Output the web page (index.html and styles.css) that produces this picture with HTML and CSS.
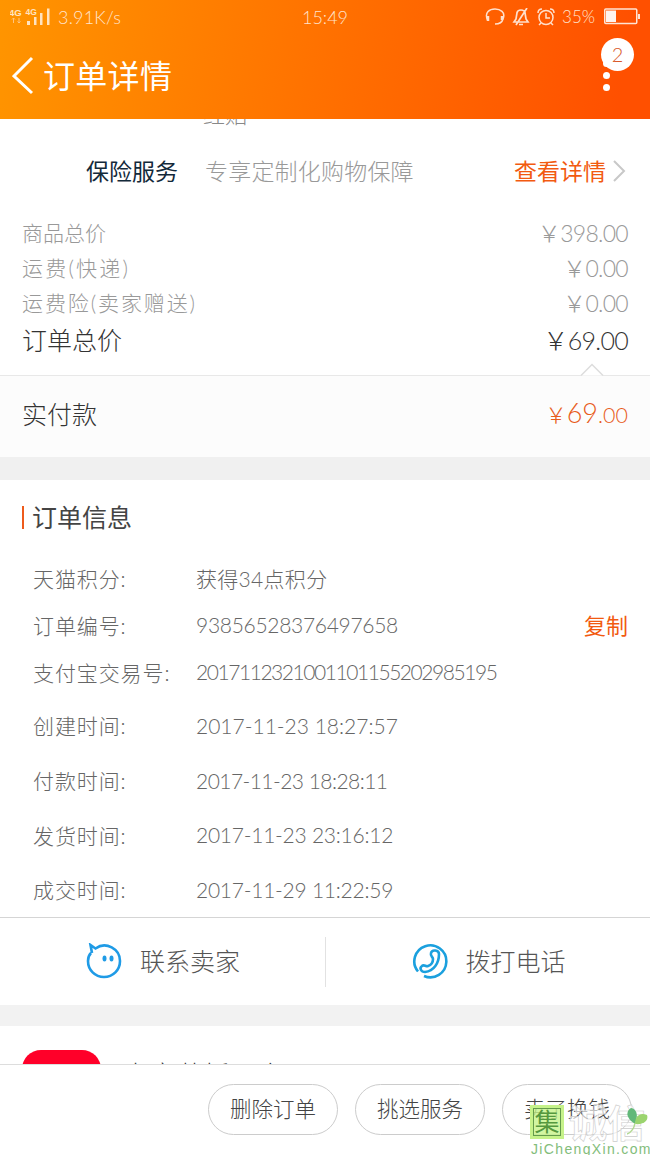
FILE: index.html
```html
<!DOCTYPE html>
<html lang="zh-CN">
<head>
<meta charset="utf-8">
<title>订单详情</title>
<link rel="stylesheet" href="styles.css">
</head>
<body>
<div class="phone">
  <header class="top">
    <div class="status">
      <div class="net">
        <svg width="42" height="18" viewBox="0 0 42 18"><g fill="#ffe3c0"><text x="-1" y="8" class="sim">4G</text><text x="15.500" y="7" class="sim small">4G</text><rect x="17" y="13" width="3" height="4"/><rect x="24" y="9" width="2.5" height="8"/><rect x="30" y="5" width="2.5" height="12"/><rect x="37" y="0.500" width="2.500" height="16.500"/></g><path d="M3.500 10v5M2 11.500l1.500-1.500 1.500 1.500M9 10v5M7.500 13.500l1.500 1.500 1.500-1.500" stroke="#ffc480" fill="none"/></svg>
        <span class="speed">3.91K/s</span>
      </div>
      <span class="clock">15:49</span>
      <div class="tray">
        <svg width="20" height="18" viewBox="0 0 20 18" fill="none" stroke="#ffe0cc" stroke-width="1.500"><path d="M2.500 12C-1 4 5 1 10 1s11 3 8 10c-1 4-4 5-8 5"/><path d="M3 8v5M17 8v4" stroke-width="2.500"/></svg>
        <svg width="18" height="18" viewBox="0 0 18 18" fill="none" stroke="#ffe0cc" stroke-width="1.700"><path d="M2 14h14l-2-3-1-6c-.5-4-7.500-4-8 0l-1 6zM7 16.500h4M15 0L4 17"/></svg>
        <svg width="18" height="18" viewBox="0 0 18 18" fill="none" stroke="#ffe0cc" stroke-width="1.500"><circle cx="9" cy="9.500" r="7"/><path d="M9 5v5h4M1 5c0-3 2-4 4-4M17 5c0-3-2-4-4-4M4 15l-2 2M14 15l2 2"/></svg>
        <span class="percent">35%</span>
        <svg width="36" height="17" viewBox="0 0 36 17"><rect x=".75" y="1" width="32" height="14.500" rx="1" fill="none" stroke="#ffe4d4" stroke-width="1.500"/><path d="M34 6h2v5h-2z" fill="#ffe4d4"/><path d="M2 2.500h10v11.500H2z" fill="#fff3ee"/></svg>
      </div>
    </div>
    <div class="bar">
      <svg width="22" height="40" viewBox="0 0 22 40"><path d="M20 2L2 20l18 17" fill="none" stroke="#fff" stroke-width="3"/></svg>
      <h1>订单详情</h1>
      <div class="more"><i></i><i></i><i></i><b>2</b></div>
    </div>
  </header>
  <main>
    <div class="cut"><span>红贴</span></div>
    <div class="insure"><strong>保险服务</strong><span class="desc">专享定制化购物保障</span><a>查看详情</a><svg width="14" height="22" viewBox="0 0 14 22"><path d="M2 1l10 10L2 21" fill="none" stroke="#c8c8c8" stroke-width="2"/></svg></div>
    <div class="price r1"><span>商品总价</span><span class="num">￥398.00</span></div>
    <div class="price r2"><span>运费(快递)</span><span class="num">￥0.00</span></div>
    <div class="price r3"><span>运费险(卖家赠送)</span><span class="num">￥0.00</span></div>
    <div class="price total"><span>订单总价</span><span class="num">￥69.00</span></div>
    <div class="paid"><svg class="notch" width="24" height="13" viewBox="0 0 24 13"><path d="M1 12.500L12 1.500l11 11" fill="#fff" stroke="#ddd" stroke-width="1.500"/></svg><span>实付款</span><span class="sum">￥<em>69</em>.00</span></div>
    <div class="gap"></div>
    <section class="info">
      <h2>订单信息</h2>
      <dl>
        <div class="short first"><dt>天猫积分:</dt><dd class="points">获得34点积分</dd></div>
        <div class="short"><dt>订单编号:</dt><dd class="order">93856528376497658</dd><a>复制</a></div>
        <div class="short last"><dt>支付宝交易号:</dt><dd class="trade">2017112321001101155202985195</dd></div>
        <div><dt>创建时间:</dt><dd class="d1">2017-11-23 18:27:57</dd></div>
        <div><dt>付款时间:</dt><dd class="d2">2017-11-23 18:28:11</dd></div>
        <div><dt>发货时间:</dt><dd class="d3">2017-11-23 23:16:12</dd></div>
        <div><dt>成交时间:</dt><dd class="d4">2017-11-29 11:22:59</dd></div>
      </dl>
    </section>
    <div class="contact">
      <div><svg width="36" height="36" viewBox="0 0 36 36"><path d="M6 10L4.500 2l5 3.500C20-2 34 6 34 18c0 9-7 16-16 16S2 27 2 18c0-3 1-6 3-8" fill="none" stroke="#1f9be6" stroke-width="2.600"/><ellipse cx="18.500" cy="15.500" rx="2" ry="3" fill="#1f9be6"/><ellipse cx="25.500" cy="15.500" rx="2" ry="3" fill="#1f9be6"/></svg><span>联系卖家</span></div>
      <div><svg width="36" height="36" viewBox="0 0 36 36" fill="none" stroke="#1ba0de" stroke-width="2.600"><path d="M6 28.500A16 16 0 1 1 12 33"/><path d="M19 10c1-4 8-3 8 1 0 9-5 17-14 18-4 0-6-4-3-6 2-2 4 1 6 0 3-1 5-4 5-7 0-2-3-3-2-6z"/></svg><span>拨打电话</span></div>
    </div>
    <div class="gap low"></div>
    <div class="recommend"><i></i><span>卡宝荐播一定马</span></div>
  </main>
  <footer><button>删除订单</button><button>挑选服务</button><button>卖了换钱</button></footer>
  <div class="watermark">
    <div class="brand"><b>集</b><span>诚信</span></div>
    <svg width="22" height="28" viewBox="0 0 22 28"><path d="M8 17C-3 10 0 3 4 1c5 1 8 6 4 16z" fill="#62b879"/><path d="M8 17C8 8 14 5 20 8c2 5-3 10-12 9z" fill="#9bd46f"/><path d="M8 16C7 22 5 25 0 27" fill="none" stroke="#b2d991" stroke-width="1.500"/></svg>
    <p>JiChengXin.com</p>
  </div>
</div>
</body>
</html>
```

FILE: styles.css
```css
* { box-sizing: border-box; }
body, h1, h2, dl, dd, p { margin: 0; }
i, em { font-style: normal; }
body {
  font-family: Lato, "Noto Sans CJK SC", sans-serif;
  font-weight: 300;
  color: #555;
  background: #fff;
}
.phone { position: relative; width: 650px; height: 1155px; overflow: hidden; display: flex; flex-direction: column; }
.phone svg { flex: none; }
.top { height: 119px; flex: none; background: linear-gradient(100deg, #ff9500, #ff5000 95%); color: #fff; }
.status { height: 33px; display: grid; grid-template-columns: 1fr auto 1fr; align-items: center; padding: 0 10px; color: #ffe3cc; font-size: 18px; }
.net, .tray { display: flex; align-items: center; }
.speed { margin-left: 6px; letter-spacing: .2px; }
.sim { font: bold 9.500px "Liberation Sans", sans-serif; }
.small { font-size: 8.500px; }
.tray { justify-content: flex-end; gap: 7px; }
.tray svg:last-child { margin-left: 2px; }
.percent { font-size: 17px; }
.bar { height: 86px; display: flex; align-items: center; padding: 0 7px 0 12px; }
h1 { font-size: 32px; line-height: 40px; font-weight: 400; margin-left: 9px; letter-spacing: .3px; }
.more { position: relative; margin-left: auto; width: 40px; height: 50px; padding: 9px 0 0; display: flex; flex-direction: column; gap: 5px; }
.more i { width: 7px; height: 7px; border-radius: 50%; background: #fff; }
.more b { position: absolute; left: -2px; top: -13px; width: 33px; height: 33px; border-radius: 50%; background: #fff; color: #d95a2b; font-size: 20px; line-height: 33px; font-weight: 300; text-align: center; }
main { height: 945px; overflow: hidden; }
.cut { height: 26px; overflow: hidden; padding-left: 203px; font-size: 22px; line-height: 24px; color: #888; }
.cut span { display: block; margin-top: -16px; }
.insure { height: 52px; display: flex; align-items: center; padding: 0 24px 0 86px; font-size: 23px; }
.insure > :not(svg) { padding-bottom: 3px; }
.insure strong { width: 119px; font-weight: 400; color: #13293a; }
.desc { color: #999; letter-spacing: .2px; }
.insure a { margin-left: auto; margin-right: 6px; color: #f25a10; font-weight: 400; }
.price { height: 35px; display: flex; align-items: center; justify-content: space-between; padding: 0 22px; font-size: 21px; color: #999; }
.r1 { margin-top: 17px; }
.r2 > :first-child { letter-spacing: 2.200px; }
.r3 > :first-child { letter-spacing: 1.900px; }
.num { font-size: 23px; letter-spacing: -.7px; }
.total { height: 40px; color: #333; font-size: 25px; }
.total .num { font-size: 25px; letter-spacing: -.7px; }
.paid { position: relative; margin-top: 16px; height: 82px; border-top: 1px solid #e8e8e8; background: #fcfcfc; display: flex; align-items: center; justify-content: space-between; padding: 0 22px 8px; font-size: 25px; color: #333; }
.notch { position: absolute; right: 46px; top: -13px; }
.sum { color: #e85c1c; font-size: 21.500px; }
.sum em { font-size: 27px; }
.gap { height: 23px; background: #f0f0f0; }
.info { height: 437px; padding: 22px 22px 0; }
h2 { height: 30px; display: flex; align-items: center; font-size: 25px; line-height: 30px; font-weight: 400; color: #444; }
h2::before { content: ""; width: 2px; height: 23px; background: #ee5b1c; margin-right: 8px; }
dl { padding: 22px 0 0 11px; font-size: 21px; color: #666; }
dl div { display: flex; align-items: center; height: 54.700px; white-space: nowrap; }
dl .short { height: 47px; }
dl .last { margin-bottom: 3px; }
dt { width: 163px; letter-spacing: .9px; }
dl a { margin-left: auto; padding-bottom: 2px; color: #f25a10; font-size: 22px; font-weight: 400; }
.points { letter-spacing: .3px; }
.order { letter-spacing: -.3px; }
.trade { letter-spacing: -1.450px; }
.d2 { letter-spacing: -.55px; }
.d3, .d4 { letter-spacing: -.25px; }
.contact { height: 88px; border-top: 1px solid #d5d5d5; display: flex; align-items: center; }
.contact div { flex: 1; height: 50px; display: flex; align-items: center; gap: 18px; padding: 0 0 2px 86px; font-size: 25px; }
.contact span { padding-bottom: 2px; }
.contact div + div { border-left: 1px solid #e2e2e2; }
.low { height: 21px; background: #f2f2f2; }
.recommend { height: 38px; padding: 24px 22px 0; display: flex; gap: 22px; overflow: hidden; }
.recommend i { width: 79px; height: 79px; flex: none; border-radius: 19px; background: #ff0029; }
.recommend span { font-size: 26px; line-height: 30px; padding-top: 10px; letter-spacing: 1px; color: #333; }
footer { height: 91px; border-top: 1px solid #ddd; display: flex; justify-content: flex-end; align-items: center; gap: 17px; padding: 0 18px 2px 0; background: #fff; }
button { width: 130px; height: 51px; border: 1px solid #ccc; border-radius: 26px; background: #fff; color: #444; font: inherit; font-size: 21.500px; padding: 0 0 3px; }
.watermark { position: absolute; left: 530px; top: 1105px; width: 120px; height: 50px; }
.brand { display: flex; align-items: center; height: 34px; }
.brand b { width: 34px; height: 34px; background: #c6f28acc; border: 3px solid #c6f28a; outline: 1px solid #649b4b; outline-offset: -4px; font-size: 25px; line-height: 27px; text-align: center; color: #55983e; font-weight: 400; }
.brand span { margin-left: 5px; font-size: 38px; line-height: 34px; font-weight: 700; color: #ffffffaa; -webkit-text-stroke: .6px #ccc; }
.watermark svg { position: absolute; left: 97px; top: 2px; }
.watermark p { padding-left: 1px; font: 14px/20px "Liberation Sans", sans-serif; letter-spacing: 1.350px; color: #83bd7b; white-space: nowrap; }
```
